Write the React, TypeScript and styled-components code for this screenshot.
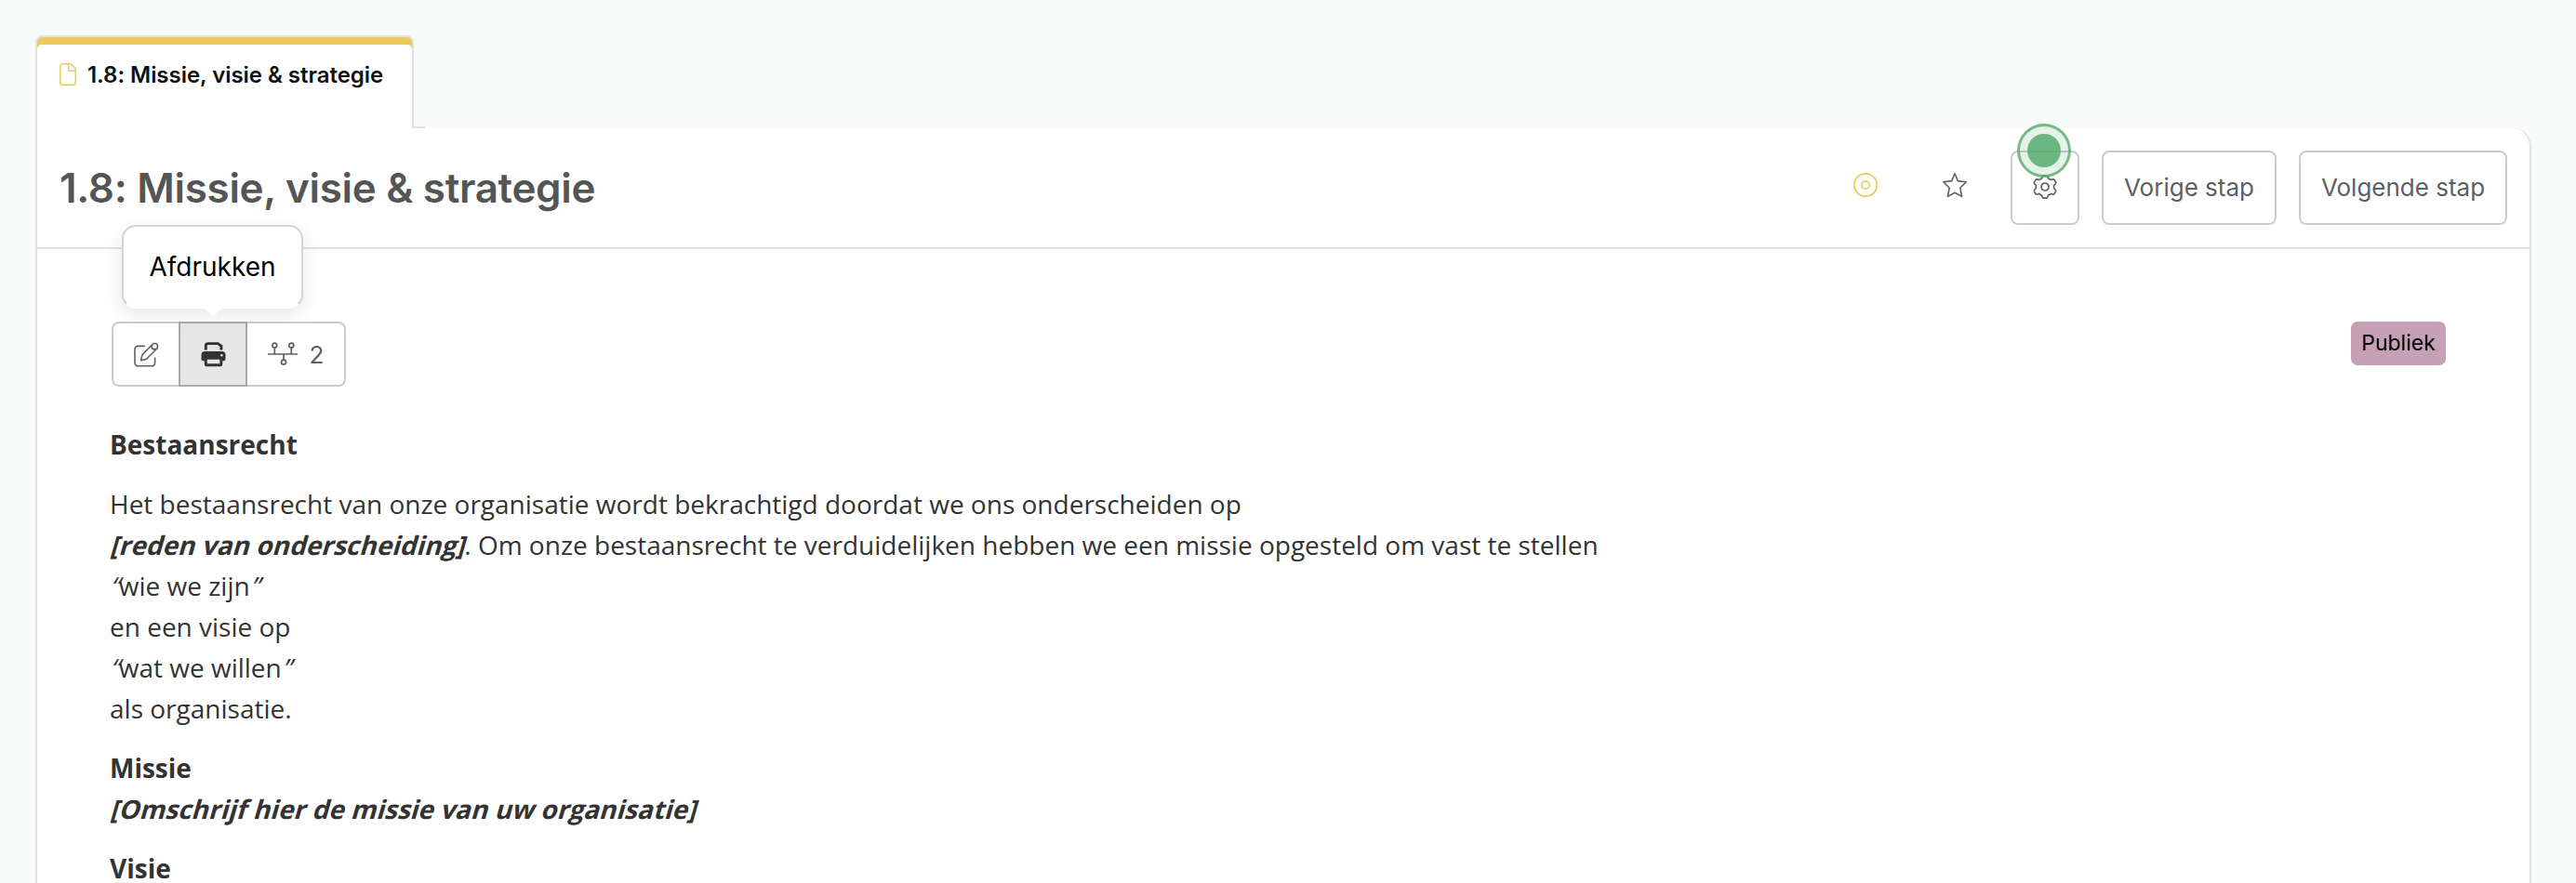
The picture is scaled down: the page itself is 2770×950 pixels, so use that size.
import styled, { createGlobalStyle } from "styled-components";

const GlobalStyle = createGlobalStyle`
  * {
    box-sizing: border-box;
  }
  body {
    margin: 0;
    height: 950px;
    overflow: hidden;
    background: #f8faf9;
    font-family: Inter, "Liberation Sans", sans-serif;
  }
`;

const Page = styled.div`
  display: flex;
  flex-direction: column;
  height: 950px;
  padding: 38px 48px 0 38px;
`;

const TabBar = styled.div`
  display: flex;
  align-items: flex-end;
  height: 100px;
`;

const Tab = styled.div`
  width: 407px;
  height: 100px;
  border: 2px solid #e0e2e1;
  border-bottom: none;
  border-radius: 8px 8px 0 0;
  background: #e8cb5c;
  padding-top: 8px;
`;

const TabInner = styled.div`
  display: flex;
  height: 90px;
  padding: 20px 0 0 24px;
  border-radius: 5px 5px 0 0;
  background: #fff;
`;

const TabLabel = styled.span`
  margin-left: 12px;
  color: #111;
  font-size: 24px;
  font-weight: 600;
  line-height: 26px;
  letter-spacing: -0.04px;
  white-space: nowrap;
`;

const TabFoot = styled.div`
  width: 12px;
  height: 2px;
  background: #e0e2e1;
`;

const Panel = styled.main`
  flex: 1;
  border: solid #e0e2e1;
  border-width: 0 2px;
  border-top-right-radius: 20px;
  background: #fff;
`;

const Header = styled.header`
  display: flex;
  align-items: center;
  height: 130px;
  padding: 0 24px;
  border-bottom: 2px solid #e0e0e0;
`;

const Title = styled.h1`
  flex: 1;
  margin: 0;
  color: #555;
  font-size: 44px;
  font-weight: 600;
  line-height: 56px;
  letter-spacing: -0.31px;
`;

const Status = styled.div`
  display: flex;
  gap: 68px;
  margin: -6px 22px 0 0;
`;

const Button = styled.button<{ $width: number }>`
  position: relative;
  display: flex;
  align-items: center;
  justify-content: center;
  width: ${({ $width }) => $width}px;
  height: 80px;
  margin-left: 24px;
  padding: 0 0 2px;
  border: 2px solid #ccc;
  border-radius: 8px;
  background: #fff;
  color: #5f5f5f;
  font: 400 26px Inter, sans-serif;
  white-space: nowrap;
`;

const Beacon = styled.span`
  position: absolute;
  top: -31px;
  left: 5px;
  display: flex;
  align-items: center;
  justify-content: center;
  width: 58px;
  height: 58px;
  border: 3px solid rgba(91, 172, 112, 0.8);
  border-radius: 50%;
  background: rgba(91, 172, 112, 0.16);

  &::after {
    content: "";
    width: 36px;
    height: 36px;
    border-radius: 50%;
    background: rgba(85, 170, 108, 0.84);
  }
`;

const Content = styled.section`
  padding: 78px 90px 0 78px;
`;

const Toolbar = styled.div`
  display: flex;
  align-items: flex-start;
  justify-content: space-between;
  margin-left: 2px;
`;

const Group = styled.div`
  display: flex;
  height: 70px;
`;

const Tool = styled.div<{ $width: number; $active?: boolean }>`
  position: relative;
  display: flex;
  align-items: center;
  justify-content: center;
  width: ${({ $width }) => $width}px;
  border: 2px solid ${({ $active }) => ($active ? "#aaa" : "#ccc")};
  background: ${({ $active }) => ($active ? "#e6e6e6" : "#fff")};
  color: #5f5f5f;
  font-size: 26px;

  &:first-child {
    border-right: none;
    border-radius: 8px 0 0 8px;
  }
  &:last-child {
    border-left: none;
    border-radius: 0 8px 8px 0;
  }
`;

const Count = styled.span`
  margin-left: 13px;
`;

const Tooltip = styled.div`
  position: absolute;
  left: -63px;
  bottom: 82px;
  display: flex;
  align-items: center;
  justify-content: center;
  width: 195px;
  height: 90px;
  border: 2px solid #d4d4d4;
  border-bottom-color: #fff;
  border-radius: 15px;
  background: #fff;
  box-shadow: 0 6px 20px rgba(0, 0, 0, 0.1);
  color: #000;
  font-size: 28px;

  &::after {
    content: "";
    position: absolute;
    top: 87px;
    left: 86px;
    border: 10px solid transparent;
    border-top-color: #fff;
    border-bottom: none;
  }
`;

const Badge = styled.span`
  display: flex;
  align-items: center;
  justify-content: center;
  width: 102px;
  height: 47px;
  padding-bottom: 1px;
  border-radius: 7px;
  background: #c6a1b5;
  color: #000;
  font-size: 23px;
`;

const Article = styled.article`
  margin-top: 40px;
  color: #333;
  font: 400 28px/44px "Open Sans", "Noto Sans", sans-serif;

  p {
    margin: 0 0 20px;
  }
`;

// slants the upright face instead of switching to the italic one
const Slanted = styled.em`
  display: inline-block;
  font-style: normal;
  transform: skewX(-16deg);
  transform-origin: 0 73%;
`;

const Placeholder = styled(Slanted)`
  font-weight: 700;
`;

const FileIcon = () => (
  <svg width="18" height="24" viewBox="0 0 18 24" fill="none" stroke="#e8cb5c" strokeWidth="1.5">
    <path d="M3 .75h8.2q.9 0 1.5.6l4 4q.6.6.6 1.5V21A2.25 2.25 0 0 1 15 23.25H3A2.25 2.25 0 0 1 .75 21V3A2.25 2.25 0 0 1 3 .75z" />
    <path d="M9.7.75v6q0 1.6 1.6 1.6h6" />
  </svg>
);

const TargetIcon = () => (
  <svg width="28" height="28" viewBox="0 0 28 28" fill="none" stroke="#e8cb5c" strokeWidth="1.7">
    <circle cx="14" cy="14" r="12.2" />
    <circle cx="14" cy="14" r="4.2" />
  </svg>
);

const StarIcon = () => (
  <svg width="28" height="28" viewBox="0 0 28 28" fill="none" stroke="#5f5f5f" strokeWidth="1.6" strokeLinejoin="round">
    <path d="m14 1.8 3.3 7.8 8.9 1.2-6.4 6.4 1.8 9.2-7.6-4.2-7.6 4.2 1.8-9.2-6.4-6.4 8.9-1.2z" />
  </svg>
);

const GearIcon = () => (
  <svg width="28" height="28" viewBox="-14 -14 28 28" fill="none" stroke="#5f5f5f" strokeWidth="1.7" strokeLinejoin="round">
    <path d="M-3.3-9.2Q-2.8-12.2-1.8-12.2H1.8Q2.8-12.2 3.3-9.2L6.3-7.5Q9.4-8.6 10-7.6L11.7-4.6Q12-3.6 9.6-1.7V1.7Q12 3.6 11.7 4.6L10 7.6Q9.4 8.6 6.3 7.5L3.3 9.2Q2.8 12.2 1.8 12.2H-1.8Q-2.8 12.2-3.3 9.2L-6.3 7.5Q-9.4 8.6-10 7.6L-11.7 4.6Q-12 3.6-9.6 1.7V-1.7Q-12-3.6-11.7-4.6L-10-7.6Q-9.4-8.6-6.3-7.5z" />
    <circle r="4" />
  </svg>
);

const EditIcon = () => (
  <svg width="27" height="27" viewBox="0 0 27 27" fill="none" stroke="#5f5f5f" strokeWidth="1.6" strokeLinejoin="round">
    <path d="M11.8 4.4H4.3A3.3 3.3 0 0 0 1 7.7v14.8a3.3 3.3 0 0 0 3.3 3.3h15a3.3 3.3 0 0 0 3.3-3.3v-6" />
    <path d="M19.8 2.7 9.4 13.1Q8.2 14.8 7.6 19.6 12.4 19 14 17.8L24.6 7.2" />
    <circle cx="22.3" cy="4.7" r="3.2" />
  </svg>
);

const PrinterIcon = () => (
  <svg width="27" height="27" viewBox="0 0 27 27">
    <path d="M5.3 8.5V4a2.4 2.4 0 0 1 2.4-2.4h10.6L21.9 4.2v4.3" fill="none" stroke="#333" strokeWidth="2.9" />
    <path d="M4.5 10h18a4 4 0 0 1 4 4v4.5a1.7 1.7 0 0 1-1.7 1.7H2.2A1.7 1.7 0 0 1 .5 18.5V14a4 4 0 0 1 4-4z" fill="#333" />
    <rect x="5.3" y="17.2" width="16.5" height="7.6" rx="1.4" fill="#e6e6e6" stroke="#333" strokeWidth="2.9" />
    <circle cx="22.3" cy="14.3" r="1.2" fill="#e6e6e6" />
  </svg>
);

const TimelineIcon = () => (
  <svg width="32" height="26" viewBox="0 0 32 26" fill="none" stroke="#5f5f5f" strokeWidth="1.7">
    <path d="M0 13h32M7.3 6.2V13M25.3 6.2V13M17 13v6" />
    <circle cx="7.3" cy="3.6" r="2.5" />
    <circle cx="25.3" cy="3.6" r="2.5" />
    <circle cx="17" cy="21.6" r="2.5" />
  </svg>
);

export default function App() {
  return (
    <>
      <GlobalStyle />
      <Page>
        <TabBar>
          <Tab>
            <TabInner>
              <FileIcon />
              <TabLabel>1.8: Missie, visie &amp; strategie</TabLabel>
            </TabInner>
          </Tab>
          <TabFoot />
        </TabBar>
        <Panel>
          <Header>
            <Title>1.8: Missie, visie &amp; strategie</Title>
            <Status>
              <TargetIcon />
              <StarIcon />
            </Status>
            <Button $width={74} aria-label="Instellingen">
              <GearIcon />
              <Beacon />
            </Button>
            <Button $width={188}>Vorige stap</Button>
            <Button $width={224}>Volgende stap</Button>
          </Header>
          <Content>
            <Toolbar>
              <Group>
                <Tool $width={72}>
                  <EditIcon />
                </Tool>
                <Tool $width={74} $active>
                  <PrinterIcon />
                  <Tooltip>Afdrukken</Tooltip>
                </Tool>
                <Tool $width={106}>
                  <TimelineIcon />
                  <Count>2</Count>
                </Tool>
              </Group>
              <Badge>Publiek</Badge>
            </Toolbar>
            <Article>
              <p>
                <strong>Bestaansrecht</strong>
              </p>
              <p>
                Het bestaansrecht van onze organisatie wordt bekrachtigd doordat we ons onderscheiden op
                <br />
                <Placeholder>[reden van onderscheiding]</Placeholder>. Om onze bestaansrecht te verduidelijken
                hebben we een missie opgesteld om vast te stellen
                <br />
                <Slanted>“</Slanted>wie we zijn<Slanted>”</Slanted>
                <br />
                en een visie op
                <br />
                <Slanted>“</Slanted>wat we willen<Slanted>”</Slanted>
                <br />
                als organisatie.
              </p>
              <p>
                <strong>Missie</strong>
                <br />
                <Placeholder>[Omschrijf hier de missie van uw organisatie]</Placeholder>
              </p>
              <p>
                <strong>Visie</strong>
              </p>
            </Article>
          </Content>
        </Panel>
      </Page>
    </>
  );
}
